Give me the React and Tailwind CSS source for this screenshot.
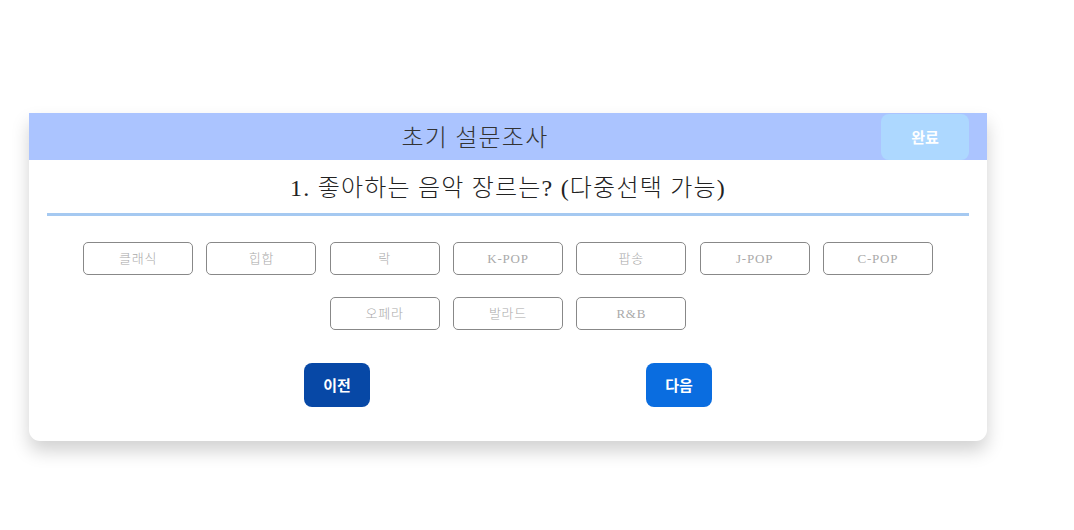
import React from 'react';

const genres = ['클래식', '힙합', '락', 'K-POP', '팝송', 'J-POP', 'C-POP', '오페라', '발라드', 'R&B'];

const GenreButton = ({ label }) => (
    <button
        className="w-[110px] h-[33px] border border-[#888] rounded-[5px] bg-white text-[13px] tracking-[0.06em] text-[#aaa] font-light font-['Liberation_Serif','Noto_Sans_CJK_KR',serif]"
    >
        {label}
    </button>
);

export default function App() {
    return (
        <div className="w-[1074px] h-[530px] bg-white font-['Noto_Sans_CJK_KR',sans-serif]">
            <div className="pt-[113px] pl-[29px]">
                <div className="w-[958px] bg-white rounded-b-[11px] shadow-[0_10px_18px_rgba(0,0,0,0.18)] pb-[34px]">
                    <div className="h-[47px] bg-[#abc4ff] flex items-center">
                        <div className="flex-1 text-center pl-[40px] pt-[3px] text-[24px] tracking-[0.05em] font-light text-[#333] font-['Liberation_Serif','Noto_Sans_CJK_KR',serif]">
                            초기 설문조사
                        </div>
                        <button className="w-[88px] h-[46px] mr-[18px] self-start mt-px rounded-[8px] bg-[#add8ff] text-white text-[15px] font-bold">
                            완료
                        </button>
                    </div>
                    <div className="h-[53px] flex items-center justify-center pt-[2px] text-[24px] tracking-[0.05em] font-light text-[#222] font-['Liberation_Serif','Noto_Sans_CJK_KR',serif]">
                        1. 좋아하는 음악 장르는? (다중선택 가능)
                    </div>
                    <div className="mx-[18px] h-[3px] bg-[#a5c9f1]" />
                    <div className="pt-[26px] flex flex-col items-center gap-[22px]">
                        <div className="flex gap-[13.3px]">
                            {genres.slice(0, 7).map((g) => (
                                <GenreButton key={g} label={g} />
                            ))}
                        </div>
                        <div className="flex gap-[13.3px]">
                            {genres.slice(7).map((g) => (
                                <GenreButton key={g} label={g} />
                            ))}
                        </div>
                    </div>
                    <div className="mt-[33px] flex justify-center gap-[276px]">
                        <button className="w-[66px] h-[44px] rounded-[8px] bg-[#0748a6] text-white text-[15px] font-bold">
                            이전
                        </button>
                        <button className="w-[66px] h-[44px] rounded-[8px] bg-[#0a6de0] text-white text-[15px] font-bold">
                            다음
                        </button>
                    </div>
                </div>
            </div>
        </div>
    );
}
